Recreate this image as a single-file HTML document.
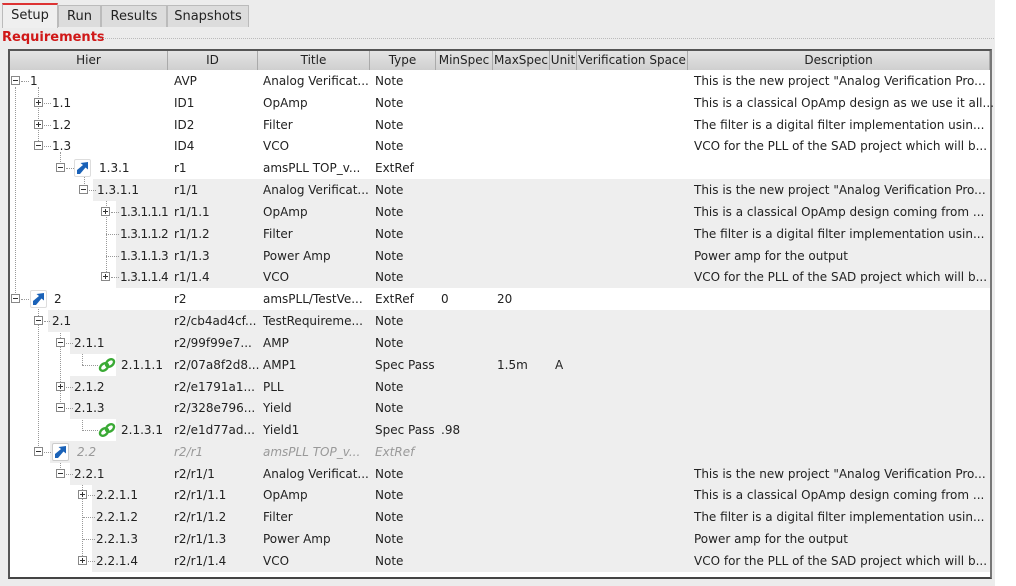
<!DOCTYPE html>
<html><head><meta charset="utf-8"><style>
*{margin:0;padding:0;box-sizing:border-box}
body{width:1016px;height:586px;position:relative;overflow:hidden;background:#fff;font-family:"DejaVu Sans","Liberation Sans",sans-serif;font-size:12px;color:#222}
#bg{position:absolute;left:0;top:0;width:995px;height:586px;background:#ececec}
.tab{position:absolute;top:5px;height:22px;border:1px solid #bbb;border-bottom:none;background:#dcdcdc;font-size:13px;padding-top:3px;text-align:center;color:#222}
.tab.sel{background:#efefef;border-top:2px solid #d33;top:3px;height:25px}
#req{position:absolute;left:2px;top:30px;font-weight:bold;color:#d01818;font-size:13px}
#reqline{position:absolute;left:100px;top:38px;width:894px;border-top:1px dotted #bbb}
#frame{position:absolute;left:8px;top:49px;width:984px;height:530px;border:2px solid #555;background:#fff;border-right-color:#777;border-bottom-color:#444}
.hd{position:absolute;top:51px;height:19px;background:linear-gradient(#e4e4e4,#cfcfcf);border-right:1px solid #aaa;text-align:center;font-size:12px;padding-top:2px;color:#222;white-space:nowrap;overflow:hidden}
.r{position:absolute;left:10px;width:980px;height:22px}
.g{position:absolute;top:0;height:22px;right:0;background:#eeeeee}
.t{position:absolute;top:4px;white-space:nowrap}
.n{letter-spacing:-0.6px}
.bx{position:absolute;top:6px;width:9px;height:9px;border:1px solid #888;background:#fff}
.bx:before{content:"";position:absolute;left:1px;top:3px;width:5px;height:1px;background:#333}
.bx.p:after{content:"";position:absolute;left:3px;top:1px;width:1px;height:5px;background:#333}
.hl{position:absolute;top:11px;border-top:1px dotted #999;height:0}
.vl{position:absolute;border-left:1px dotted #999;width:0}
.ic{position:absolute;top:2px;width:17px;height:18px;background:#fff;border:1px solid #ddd;border-radius:2px}
.it{color:#999;font-style:italic}
</style></head><body>
<div id="bg"></div>
<div class="tab sel" style="left:2px;width:56px">Setup</div>
<div class="tab" style="left:58px;width:43px">Run</div>
<div class="tab" style="left:101px;width:66px">Results</div>
<div class="tab" style="left:167px;width:82px">Snapshots</div>
<div id="req">Requirements</div><div id="reqline"></div>
<div id="frame"></div>
<div class="hd" style="left:10px;width:158px">Hier</div>
<div class="hd" style="left:168px;width:90px">ID</div>
<div class="hd" style="left:258px;width:112px">Title</div>
<div class="hd" style="left:370px;width:66px">Type</div>
<div class="hd" style="left:436px;width:57px">MinSpec</div>
<div class="hd" style="left:493px;width:57px">MaxSpec</div>
<div class="hd" style="left:550px;width:27px">Unit</div>
<div class="hd" style="left:577px;width:111px">Verification Space</div>
<div class="hd" style="left:688px;width:302px">Description</div>

<div class="vl" style="left:15px;top:87px;height:212px"></div>
<div class="vl" style="left:38px;top:87px;height:58px"></div>
<div class="vl" style="left:60px;top:152px;height:16px"></div>
<div class="vl" style="left:84px;top:174px;height:16px"></div>
<div class="vl" style="left:106px;top:196px;height:82px"></div>
<div class="vl" style="left:38px;top:306px;height:146px"></div>
<div class="vl" style="left:60px;top:327px;height:81px"></div>
<div class="vl" style="left:82px;top:349px;height:16px"></div>
<div class="vl" style="left:82px;top:415px;height:16px"></div>
<div class="vl" style="left:60px;top:458px;height:16px"></div>
<div class="vl" style="left:82px;top:480px;height:82px"></div>

<div class="r" style="top:70px"><div class="bx" style="left:1px"></div><div class="hl" style="left:11px;width:8px"></div><span class="t" style="left:20px">1</span><span class="t" style="left:164px">AVP</span><span class="t" style="left:253px">Analog Verificat...</span><span class="t" style="left:365px">Note</span><span class="t" style="left:684px">This is the new project "Analog Verification Pro...</span></div>
<div class="r" style="top:92px"><div class="bx p" style="left:24px"></div><div class="hl" style="left:34px;width:7px"></div><span class="t" style="left:42px">1.1</span><span class="t" style="left:164px">ID1</span><span class="t" style="left:253px">OpAmp</span><span class="t" style="left:365px">Note</span><span class="t" style="left:684px">This is a classical OpAmp design as we use it all...</span></div>
<div class="r" style="top:114px"><div class="bx p" style="left:24px"></div><div class="hl" style="left:34px;width:7px"></div><span class="t" style="left:42px">1.2</span><span class="t" style="left:164px">ID2</span><span class="t" style="left:253px">Filter</span><span class="t" style="left:365px">Note</span><span class="t" style="left:684px">The filter is a digital filter implementation usin...</span></div>
<div class="r" style="top:135px"><div class="bx" style="left:24px"></div><div class="hl" style="left:34px;width:7px"></div><span class="t" style="left:42px">1.3</span><span class="t" style="left:164px">ID4</span><span class="t" style="left:253px">VCO</span><span class="t" style="left:365px">Note</span><span class="t" style="left:684px">VCO for the PLL of the SAD project which will b...</span></div>
<div class="r" style="top:157px"><div class="bx" style="left:46px"></div><div class="hl" style="left:56px;width:8px"></div><div class="ic" style="left:64px"><svg width="15" height="16" viewBox="0 0 15 16"><path d="M2 14 L2 10 L8 5 L5.5 3 L13 2 L13 9.5 L10.5 7.5 L5 14 Z" fill="#1a62b8"/></svg></div><span class="t" style="left:89px">1.3.1</span><span class="t" style="left:164px">r1</span><span class="t" style="left:253px">amsPLL TOP_v...</span><span class="t" style="left:365px">ExtRef</span></div>
<div class="r" style="top:179px"><div class="g" style="left:83px"></div><div class="bx" style="left:69px"></div><div class="hl" style="left:79px;width:7px"></div><span class="t" style="left:87px">1.3.1.1</span><span class="t" style="left:164px">r1/1</span><span class="t" style="left:253px">Analog Verificat...</span><span class="t" style="left:365px">Note</span><span class="t" style="left:684px">This is the new project "Analog Verification Pro...</span></div>
<div class="r" style="top:201px"><div class="g" style="left:106px"></div><div class="bx p" style="left:91px"></div><div class="hl" style="left:101px;width:8px"></div><span class="t n" style="left:110px">1.3.1.1.1</span><span class="t" style="left:164px">r1/1.1</span><span class="t" style="left:253px">OpAmp</span><span class="t" style="left:365px">Note</span><span class="t" style="left:684px">This is a classical OpAmp design coming from ...</span></div>
<div class="r" style="top:223px"><div class="g" style="left:106px"></div><div class="hl" style="left:96px;width:13px"></div><span class="t n" style="left:110px">1.3.1.1.2</span><span class="t" style="left:164px">r1/1.2</span><span class="t" style="left:253px">Filter</span><span class="t" style="left:365px">Note</span><span class="t" style="left:684px">The filter is a digital filter implementation usin...</span></div>
<div class="r" style="top:245px"><div class="g" style="left:106px"></div><div class="hl" style="left:96px;width:13px"></div><span class="t n" style="left:110px">1.3.1.1.3</span><span class="t" style="left:164px">r1/1.3</span><span class="t" style="left:253px">Power Amp</span><span class="t" style="left:365px">Note</span><span class="t" style="left:684px">Power amp for the output</span></div>
<div class="r" style="top:266px"><div class="g" style="left:106px"></div><div class="bx p" style="left:91px"></div><div class="hl" style="left:101px;width:8px"></div><span class="t n" style="left:110px">1.3.1.1.4</span><span class="t" style="left:164px">r1/1.4</span><span class="t" style="left:253px">VCO</span><span class="t" style="left:365px">Note</span><span class="t" style="left:684px">VCO for the PLL of the SAD project which will b...</span></div>
<div class="r" style="top:288px"><div class="bx" style="left:1px"></div><div class="hl" style="left:11px;width:8px"></div><div class="ic" style="left:20px"><svg width="15" height="16" viewBox="0 0 15 16"><path d="M2 14 L2 10 L8 5 L5.5 3 L13 2 L13 9.5 L10.5 7.5 L5 14 Z" fill="#1a62b8"/></svg></div><span class="t" style="left:44px">2</span><span class="t" style="left:164px">r2</span><span class="t" style="left:253px">amsPLL/TestVe...</span><span class="t" style="left:365px">ExtRef</span><span class="t" style="left:431px">0</span><span class="t" style="left:487px">20</span></div>
<div class="r" style="top:310px"><div class="g" style="left:38px"></div><div class="bx" style="left:24px"></div><div class="hl" style="left:34px;width:6px"></div><span class="t" style="left:42px">2.1</span><span class="t" style="left:164px">r2/cb4ad4cf...</span><span class="t" style="left:253px">TestRequireme...</span><span class="t" style="left:365px">Note</span></div>
<div class="r" style="top:332px"><div class="g" style="left:60px"></div><div class="bx" style="left:46px"></div><div class="hl" style="left:56px;width:7px"></div><span class="t" style="left:64px">2.1.1</span><span class="t" style="left:164px">r2/99f99e7...</span><span class="t" style="left:253px">AMP</span><span class="t" style="left:365px">Note</span></div>
<div class="r" style="top:354px"><div class="g" style="left:106px"></div><div class="hl" style="left:72px;width:16px"></div><svg style="position:absolute;left:88px;top:3px" width="18" height="16" viewBox="0 0 18 16"><ellipse cx="6" cy="10" rx="4.5" ry="3.2" transform="rotate(-40 6 10)" fill="none" stroke="#3aaa35" stroke-width="2.4"/><ellipse cx="12" cy="6" rx="4.5" ry="3.2" transform="rotate(-40 12 6)" fill="none" stroke="#3aaa35" stroke-width="2.4"/></svg><span class="t" style="left:111px">2.1.1.1</span><span class="t" style="left:164px">r2/07a8f2d8...</span><span class="t" style="left:253px">AMP1</span><span class="t" style="left:365px">Spec Pass</span><span class="t" style="left:487px">1.5m</span><span class="t" style="left:545px">A</span></div>
<div class="r" style="top:376px"><div class="g" style="left:60px"></div><div class="bx p" style="left:46px"></div><div class="hl" style="left:56px;width:7px"></div><span class="t" style="left:64px">2.1.2</span><span class="t" style="left:164px">r2/e1791a1...</span><span class="t" style="left:253px">PLL</span><span class="t" style="left:365px">Note</span></div>
<div class="r" style="top:397px"><div class="g" style="left:60px"></div><div class="bx" style="left:46px"></div><div class="hl" style="left:56px;width:7px"></div><span class="t" style="left:64px">2.1.3</span><span class="t" style="left:164px">r2/328e796...</span><span class="t" style="left:253px">Yield</span><span class="t" style="left:365px">Note</span></div>
<div class="r" style="top:419px"><div class="g" style="left:106px"></div><div class="hl" style="left:72px;width:16px"></div><svg style="position:absolute;left:88px;top:3px" width="18" height="16" viewBox="0 0 18 16"><ellipse cx="6" cy="10" rx="4.5" ry="3.2" transform="rotate(-40 6 10)" fill="none" stroke="#3aaa35" stroke-width="2.4"/><ellipse cx="12" cy="6" rx="4.5" ry="3.2" transform="rotate(-40 12 6)" fill="none" stroke="#3aaa35" stroke-width="2.4"/></svg><span class="t" style="left:111px">2.1.3.1</span><span class="t" style="left:164px">r2/e1d77ad...</span><span class="t" style="left:253px">Yield1</span><span class="t" style="left:365px">Spec Pass</span><span class="t" style="left:431px">.98</span></div>
<div class="r" style="top:441px"><div class="g" style="left:40px"></div><div class="bx" style="left:24px"></div><div class="hl" style="left:34px;width:7px"></div><div class="ic" style="left:42px;border-color:#ccc"><svg width="15" height="16" viewBox="0 0 15 16"><path d="M2 14 L2 10 L8 5 L5.5 3 L13 2 L13 9.5 L10.5 7.5 L5 14 Z" fill="#1a62b8"/></svg></div><span class="t it" style="left:67px">2.2</span><span class="t it" style="left:164px">r2/r1</span><span class="t it" style="left:253px">amsPLL TOP_v...</span><span class="t it" style="left:365px">ExtRef</span></div>
<div class="r" style="top:463px"><div class="g" style="left:60px"></div><div class="bx" style="left:46px"></div><div class="hl" style="left:56px;width:7px"></div><span class="t" style="left:64px">2.2.1</span><span class="t" style="left:164px">r2/r1/1</span><span class="t" style="left:253px">Analog Verificat...</span><span class="t" style="left:365px">Note</span><span class="t" style="left:684px">This is the new project "Analog Verification Pro...</span></div>
<div class="r" style="top:484px"><div class="g" style="left:82px"></div><div class="bx p" style="left:68px"></div><div class="hl" style="left:78px;width:7px"></div><span class="t" style="left:86px">2.2.1.1</span><span class="t" style="left:164px">r2/r1/1.1</span><span class="t" style="left:253px">OpAmp</span><span class="t" style="left:365px">Note</span><span class="t" style="left:684px">This is a classical OpAmp design coming from ...</span></div>
<div class="r" style="top:506px"><div class="g" style="left:82px"></div><div class="hl" style="left:73px;width:12px"></div><span class="t" style="left:86px">2.2.1.2</span><span class="t" style="left:164px">r2/r1/1.2</span><span class="t" style="left:253px">Filter</span><span class="t" style="left:365px">Note</span><span class="t" style="left:684px">The filter is a digital filter implementation usin...</span></div>
<div class="r" style="top:528px"><div class="g" style="left:82px"></div><div class="hl" style="left:73px;width:12px"></div><span class="t" style="left:86px">2.2.1.3</span><span class="t" style="left:164px">r2/r1/1.3</span><span class="t" style="left:253px">Power Amp</span><span class="t" style="left:365px">Note</span><span class="t" style="left:684px">Power amp for the output</span></div>
<div class="r" style="top:550px"><div class="g" style="left:82px"></div><div class="bx p" style="left:68px"></div><div class="hl" style="left:78px;width:7px"></div><span class="t" style="left:86px">2.2.1.4</span><span class="t" style="left:164px">r2/r1/1.4</span><span class="t" style="left:253px">VCO</span><span class="t" style="left:365px">Note</span><span class="t" style="left:684px">VCO for the PLL of the SAD project which will b...</span></div>
</body></html>
